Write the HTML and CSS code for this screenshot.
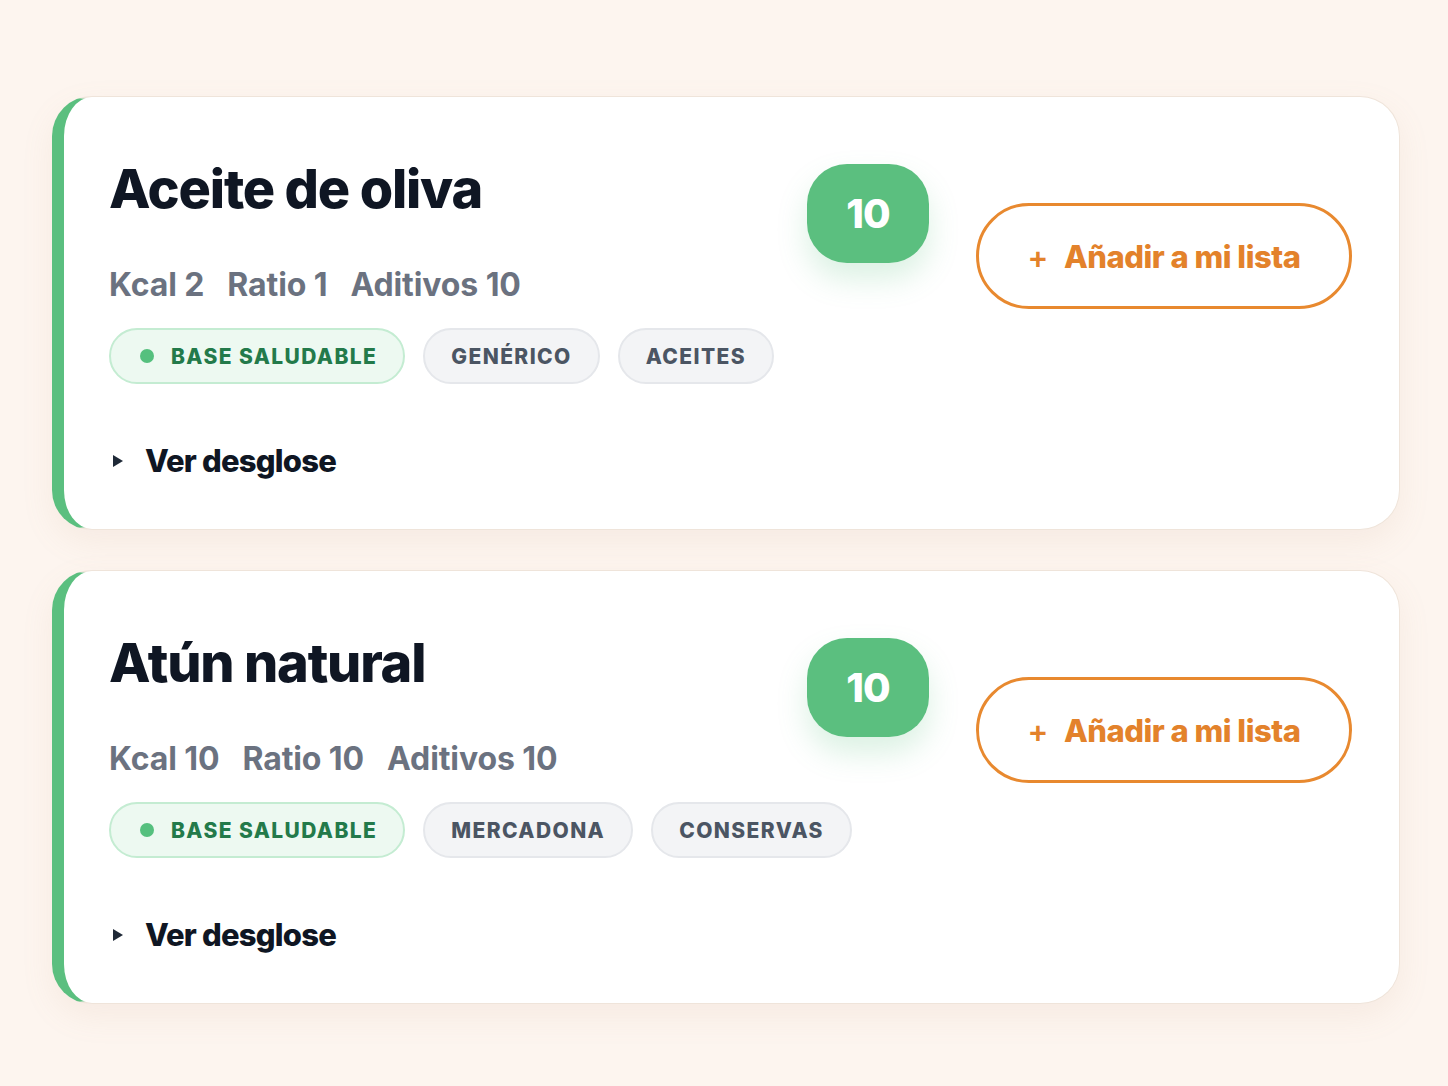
FILE: index.html
```html
<!DOCTYPE html>
<html lang="es">
<head>
    <meta charset="UTF-8">
    <title>Productos</title>
    <link rel="stylesheet" href="styles.css">
</head>
<body>
<div class="product-list">
    <div class="product-card">
        <div class="product-main">
            <h2 class="product-title">Aceite de oliva</h2>
            <div class="product-meta">
                <span>Kcal 2</span>
                <span>Ratio 1</span>
                <span>Aditivos 10</span>
            </div>
            <div class="product-tags">
                <span class="tag tag-health"><i class="tag-dot"></i>BASE SALUDABLE</span>
                <span class="tag">GENÉRICO</span>
                <span class="tag">ACEITES</span>
            </div>
            <details class="product-details">
                <summary>Ver desglose</summary>
            </details>
        </div>
        <div class="product-score">10</div>
        <a class="add-button" href="javascript:void(0);"><span class="add-plus">+</span>Añadir a mi lista</a>
    </div>

    <div class="product-card">
        <div class="product-main">
            <h2 class="product-title">Atún natural</h2>
            <div class="product-meta">
                <span>Kcal 10</span>
                <span>Ratio 10</span>
                <span>Aditivos 10</span>
            </div>
            <div class="product-tags">
                <span class="tag tag-health"><i class="tag-dot"></i>BASE SALUDABLE</span>
                <span class="tag">MERCADONA</span>
                <span class="tag">CONSERVAS</span>
            </div>
            <details class="product-details">
                <summary>Ver desglose</summary>
            </details>
        </div>
        <div class="product-score">10</div>
        <a class="add-button" href="javascript:void(0);"><span class="add-plus">+</span>Añadir a mi lista</a>
    </div>
</div>
</body>
</html>
```

FILE: styles.css
```css
* {
    box-sizing: border-box;
}
html, body {
    margin: 0;
    padding: 0;
}
body {
    background: #fdf5ef;
    font-family: "Inter", "Noto Sans", sans-serif;
    color: #111827;
}
.product-list {
    display: flex;
    flex-direction: column;
    gap: 40px;
    padding: 96px 48px 80px 52px;
}
.product-card {
    display: flex;
    align-items: flex-start;
    background: #ffffff;
    border: 1px solid #efe4da;
    border-left: 12px solid #5bbf7f;
    border-radius: 40px;
    box-shadow: 0 12px 32px rgba(190, 150, 120, 0.10);
    padding: 60px 47px 36px 45px;
    min-height: 434px;
}
.product-main {
    flex: 1;
    min-width: 0;
}
.product-title {
    margin: 0;
    font-size: 54px;
    line-height: 64px;
    font-weight: 800;
    letter-spacing: -1.2px;
    color: #0f1623;
}
.product-meta {
    display: flex;
    gap: 23px;
    margin-top: 44px;
    font-size: 32px;
    line-height: 40px;
    font-weight: 700;
    letter-spacing: -0.1px;
    color: #6b7280;
}
.product-tags {
    display: flex;
    gap: 18px;
    margin-top: 23px;
}
.tag {
    display: inline-flex;
    align-items: center;
    flex-shrink: 0;
    white-space: nowrap;
    height: 56px;
    padding: 0 26px;
    border-radius: 28px;
    background: #f3f4f6;
    border: 2px solid #e5e7eb;
    font-size: 21px;
    font-weight: 800;
    letter-spacing: 1.4px;
    color: #4b5563;
}
.tag-health {
    background: #edf9f1;
    border-color: #c4ecd2;
    color: #237a4a;
    padding-left: 29px;
}
.tag-dot {
    width: 14px;
    height: 14px;
    border-radius: 50%;
    background: #55c07e;
    margin-right: 17px;
}
.product-details {
    margin-top: 58px;
}
.product-details summary {
    font-size: 31px;
    font-weight: 800;
    letter-spacing: -0.8px;
    color: #0f1623;
    cursor: pointer;
    list-style: none;
    display: flex;
    align-items: center;
}
.product-details summary::before {
    content: "";
    width: 0;
    height: 0;
    border-top: 6px solid transparent;
    border-bottom: 6px solid transparent;
    border-left: 10px solid #1f2937;
    margin: 0 22px 0 4px;
}
.product-score {
    width: 122px;
    height: 99px;
    margin-top: 7px;
    border-radius: 40px;
    background: #5bbf7f;
    color: #ffffff;
    font-size: 40px;
    font-weight: 800;
    letter-spacing: -1px;
    display: flex;
    align-items: center;
    justify-content: center;
    box-shadow: 0 16px 30px rgba(91, 191, 127, 0.22);
}
.add-button {
    width: 376px;
    height: 106px;
    margin-top: 46px;
    margin-left: 47px;
    border: 3px solid #e8892f;
    border-radius: 53px;
    display: flex;
    align-items: center;
    justify-content: center;
    text-decoration: none;
    font-size: 31px;
    font-weight: 800;
    letter-spacing: -0.5px;
    color: #e3822b;
}
.add-plus {
    margin-right: 16px;
    font-weight: 600;
}
```
